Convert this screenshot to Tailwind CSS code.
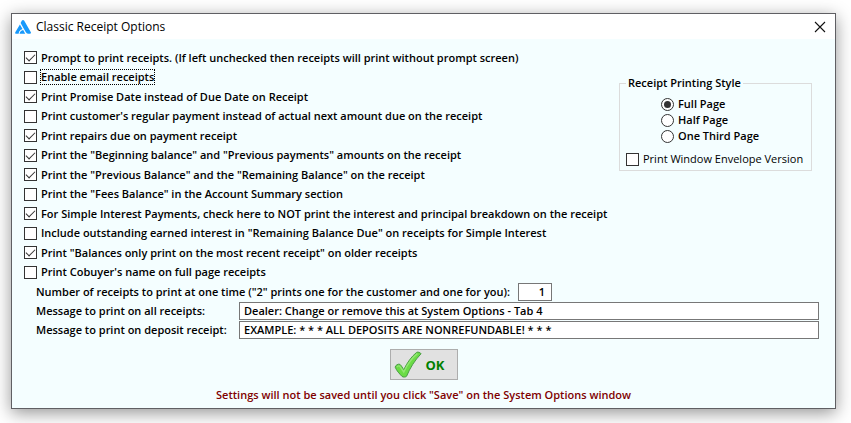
<!DOCTYPE html>
<html lang="en">
<head>
    <meta charset="UTF-8">
    <meta name="viewport" content="width=device-width, initial-scale=1.0">
    <title>Classic Receipt Options</title>
    <script src="https://cdn.jsdelivr.net/npm/@tailwindcss/browser@4"></script>
</head>
<body class="bg-white pt-[13px] pl-[11px] pr-[15px] pb-[14px] overflow-hidden font-['Open_Sans',sans-serif] text-[11px] leading-4 text-black">
    <div class="border border-[#5f5f63] bg-[#f4feff] shadow-[0_4px_16px_rgba(0,0,0,0.42)]">
        <!-- Title bar -->
        <header class="flex items-center justify-between h-[25px] bg-white pl-[3px] pr-[9px]">
            <div class="flex items-center gap-[5px]">
                <svg class="w-4 h-[14px]" viewBox="0 0 16 14" fill="#1899fb">
                    <path d="M6.9 0.6Q8 -0.6 9.1 0.6L16 12.4Q16 13.8 14.8 13.8H13Q11.6 13.6 10.7 12L5.6 3.1Z"/>
                    <path d="M4.9 4.4L7.5 9Q5.2 9.6 4.2 11.6L3.6 13.8H0.8Q-0.2 13.4 0.3 12.2Z"/>
                    <path d="M8.2 10.1L10.2 13.8H4.5Q5.2 10.6 8.2 10.1Z"/>
                </svg>
                <h1 class="text-[12px]">Classic Receipt Options</h1>
            </div>
            <button type="button" aria-label="Close">
                <svg class="w-[12px] h-[12px]" viewBox="0 0 12 12" fill="none" stroke="#111" stroke-width="1.1">
                    <path d="M1 1L11 11M11 1L1 11"/>
                </svg>
            </button>
        </header>

        <form class="pt-[9px] px-3 pb-[5px] font-semibold">
            <div class="flex justify-between items-start">
                <!-- Print options -->
                <div class="grid grid-rows-12 h-[234px] whitespace-nowrap">
                    <label class="flex items-center gap-1"><input type="checkbox" checked class="appearance-none size-[13px] border border-[#333] bg-white grid place-items-center checked:before:block checked:before:w-[9px] checked:before:h-[5px] checked:before:border-l checked:before:border-b checked:before:border-[#333] checked:before:-rotate-45 checked:before:-translate-y-px">Prompt to print receipts. (If left unchecked then receipts will print without prompt screen)</label>
                    <label class="flex items-center gap-1"><input type="checkbox" class="appearance-none size-[13px] border border-[#333] bg-white"><span class="outline outline-dotted outline-black h-[14px] leading-[14px]">Enable email receipts</span></label>
                    <label class="flex items-center gap-1"><input type="checkbox" checked class="appearance-none size-[13px] border border-[#333] bg-white grid place-items-center checked:before:block checked:before:w-[9px] checked:before:h-[5px] checked:before:border-l checked:before:border-b checked:before:border-[#333] checked:before:-rotate-45 checked:before:-translate-y-px">Print Promise Date instead of Due Date on Receipt</label>
                    <label class="flex items-center gap-1"><input type="checkbox" class="appearance-none size-[13px] border border-[#333] bg-white">Print customer's regular payment instead of actual next amount due on the receipt</label>
                    <label class="flex items-center gap-1"><input type="checkbox" checked class="appearance-none size-[13px] border border-[#333] bg-white grid place-items-center checked:before:block checked:before:w-[9px] checked:before:h-[5px] checked:before:border-l checked:before:border-b checked:before:border-[#333] checked:before:-rotate-45 checked:before:-translate-y-px">Print repairs due on payment receipt</label>
                    <label class="flex items-center gap-1"><input type="checkbox" checked class="appearance-none size-[13px] border border-[#333] bg-white grid place-items-center checked:before:block checked:before:w-[9px] checked:before:h-[5px] checked:before:border-l checked:before:border-b checked:before:border-[#333] checked:before:-rotate-45 checked:before:-translate-y-px">Print the "Beginning balance" and "Previous payments" amounts on the receipt</label>
                    <label class="flex items-center gap-1"><input type="checkbox" checked class="appearance-none size-[13px] border border-[#333] bg-white grid place-items-center checked:before:block checked:before:w-[9px] checked:before:h-[5px] checked:before:border-l checked:before:border-b checked:before:border-[#333] checked:before:-rotate-45 checked:before:-translate-y-px">Print the "Previous Balance" and the "Remaining Balance" on the receipt</label>
                    <label class="flex items-center gap-1"><input type="checkbox" class="appearance-none size-[13px] border border-[#333] bg-white">Print the "Fees Balance" in the Account Summary section</label>
                    <label class="flex items-center gap-1"><input type="checkbox" checked class="appearance-none size-[13px] border border-[#333] bg-white grid place-items-center checked:before:block checked:before:w-[9px] checked:before:h-[5px] checked:before:border-l checked:before:border-b checked:before:border-[#333] checked:before:-rotate-45 checked:before:-translate-y-px">For Simple Interest Payments, check here to NOT print the interest and principal breakdown on the receipt</label>
                    <label class="flex items-center gap-1"><input type="checkbox" class="appearance-none size-[13px] border border-[#333] bg-white">Include outstanding earned interest in "Remaining Balance Due" on receipts for Simple Interest</label>
                    <label class="flex items-center gap-1"><input type="checkbox" checked class="appearance-none size-[13px] border border-[#333] bg-white grid place-items-center checked:before:block checked:before:w-[9px] checked:before:h-[5px] checked:before:border-l checked:before:border-b checked:before:border-[#333] checked:before:-rotate-45 checked:before:-translate-y-px">Print "Balances only print on the most recent receipt" on older receipts</label>
                    <label class="flex items-center gap-1"><input type="checkbox" class="appearance-none size-[13px] border border-[#333] bg-white">Print Cobuyer's name on full page receipts</label>
                </div>

                <!-- Printing style -->
                <fieldset class="shrink-0 w-[193px] mt-[27px] mr-[11px] border border-[#dcdcdc] pl-[6px] pb-[3px] whitespace-nowrap">
                    <legend class="px-[2px]">Receipt Printing Style</legend>
                    <div class="flex flex-col pl-[35px] pt-[5px]">
                        <label class="flex items-center gap-1"><input type="radio" name="style" checked class="appearance-none size-[13px] rounded-full border border-[#333] bg-white grid place-items-center checked:before:block checked:before:size-[7px] checked:before:rounded-full checked:before:bg-[#333]">Full Page</label>
                        <label class="flex items-center gap-1"><input type="radio" name="style" class="appearance-none size-[13px] rounded-full border border-[#333] bg-white">Half Page</label>
                        <label class="flex items-center gap-1"><input type="radio" name="style" class="appearance-none size-[13px] rounded-full border border-[#333] bg-white">One Third Page</label>
                    </div>
                    <label class="flex items-center gap-1 mt-[7px] font-normal"><input type="checkbox" class="appearance-none size-[13px] border border-[#333] bg-white">Print Window Envelope Version</label>
                </fieldset>
            </div>

            <!-- Count and messages -->
            <div class="grid grid-rows-3 h-[57px] pl-3 pr-1">
                <div class="flex items-center gap-2">
                    <label for="copies">Number of receipts to print at one time ("2" prints one for the customer and one for you):</label>
                    <input id="copies" type="text" value="1" class="w-[34px] h-[18px] border border-[#777] bg-white text-right pr-[6px]">
                </div>
                <div class="flex items-center">
                    <label for="msgAll" class="w-[203px] shrink-0">Message to print on all receipts:</label>
                    <input id="msgAll" type="text" value="Dealer: Change or remove this at System Options - Tab 4" class="grow h-[18px] border border-[#777] bg-white px-1">
                </div>
                <div class="flex items-center">
                    <label for="msgDeposit" class="w-[203px] shrink-0">Message to print on deposit receipt:</label>
                    <input id="msgDeposit" type="text" value="EXAMPLE: * * * ALL DEPOSITS ARE NONREFUNDABLE! * * *" class="grow h-[18px] border border-[#777] bg-white px-1">
                </div>
            </div>

            <div class="flex flex-col items-center gap-[7px] mt-[10px]">
                <button type="submit" class="flex items-center gap-1 w-[68px] h-[31px] pl-[3px] border border-[#adadad] bg-[#e1e1e1] text-[13px] font-bold text-[#008000]">
                    <svg class="w-7 h-[27px]" viewBox="0 0 28 27">
                        <path d="M1.2 16.2C1 14.4 4.6 12.4 6 13.4C7.5 14.6 8.5 17 9.8 18.6C13.2 11.5 17.5 5.5 22.6 1.4C23.8 0.6 26.6 1.6 27 2.8C20.8 9.2 16 17 12.6 25.2C11.8 26.2 9 26.4 8 25.4C5.6 22.8 2.6 19.8 1.2 16.2Z" fill="#6bdc45" stroke="#4a9c45" stroke-width="1"/>
                        <path d="M3 16C4.2 14.6 5.2 14.6 6 15.6L9.8 21C13.4 13.4 17.6 7.2 23.4 2.6" fill="none" stroke="#93e673" stroke-width="1.4"/>
                    </svg>
                    OK
                </button>
                <p class="text-[#800000]">Settings will not be saved until you click "Save" on the System Options window</p>
            </div>
        </form>
    </div>
</body>
</html>
